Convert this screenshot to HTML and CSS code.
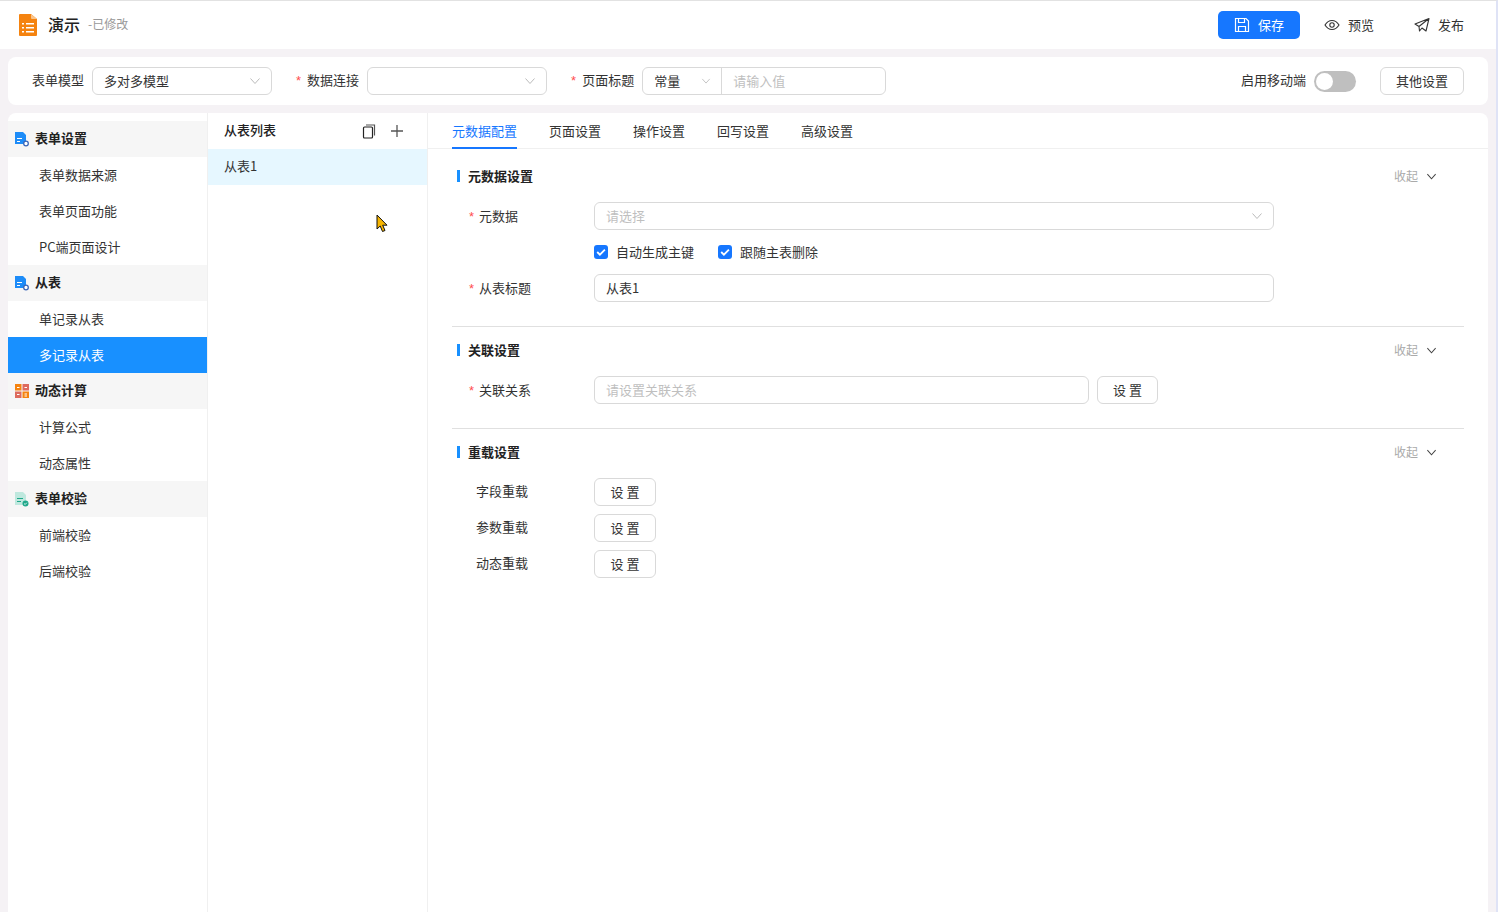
FILE: index.html
```html
<!DOCTYPE html>
<html lang="zh-CN">
<head>
<meta charset="utf-8">
<title>演示</title>
<link rel="stylesheet" href="styles.css">
</head>
<body>
<div class="page">
  <header class="topbar">
    <svg class="logo" width="18" height="22" viewBox="0 0 18 22"><path d="M1 0h11l6 5v16a1 1 0 0 1-1 1H1a1 1 0 0 1-1-1V1a1 1 0 0 1 1-1z" fill="#f5830f"/><path d="M12 0l6 5h-5a1 1 0 0 1-1-1z" fill="#f9c48c"/><path d="M3 9h2v1.500H3zM7 9h8v1.500H7zM3 13h2v1.500H3zM7 13h8v1.500H7zM3 17h2v1.500H3zM7 17h8v1.500H7z" fill="#fff"/></svg>
    <span class="app-name">演示</span>
    <span class="app-state">-已修改</span>
    <div class="top-actions">
      <button class="btn-save">
        <svg width="16" height="16" viewBox="0 0 16 16" fill="none" stroke="#fff" stroke-width="1.200"><path d="M1.500 1.500h10.500l2.500 2.500v10.500h-13z"/><path d="M4.500 1.500v4h6v-4M4.500 14.500v-5h7v5"/></svg>
        <span>保存</span>
      </button>
      <span class="top-link preview">
        <svg width="16" height="16" viewBox="0 0 16 16" fill="none" stroke="#333" stroke-width="1.100"><path d="M1 8c2-3.300 4.300-4.500 7-4.500s5 1.200 7 4.500c-2 3.300-4.300 4.500-7 4.500S3 11.300 1 8z"/><circle cx="8" cy="8" r="2.200"/></svg>
        <span>预览</span>
      </span>
      <span class="top-link publish">
        <svg width="16" height="16" viewBox="0 0 16 16" fill="none" stroke="#333" stroke-width="1.100" stroke-linejoin="round"><path d="M15 1.500L1 7l4 2.500L15 1.500l-3 12.500-4-3-2.500 3-.5-4.500"/></svg>
        <span>发布</span>
      </span>
    </div>
  </header>

  <section class="toolbar">
    <span class="tb-label tb-first">表单模型</span>
    <div class="select tb-model"><span>多对多模型</span><svg class="chev" viewBox="0 0 12 12"><path d="M1.500 3.500L6 8.500l4.500-5"/></svg></div>
    <span class="tb-label tb-conn"><i class="req">*</i>数据连接</span>
    <div class="select tb-data"><span></span><svg class="chev" viewBox="0 0 12 12"><path d="M1.500 3.500L6 8.500l4.500-5"/></svg></div>
    <span class="tb-label tb-title"><i class="req">*</i>页面标题</span>
    <div class="combo">
      <div class="combo-left"><span>常量</span><svg class="chev chev-small" viewBox="0 0 12 12"><path d="M1.500 3.500L6 8.500l4.500-5"/></svg></div>
      <div class="combo-right">请输入值</div>
    </div>
    <span class="tb-label tb-mobile">启用移动端</span>
    <span class="switch"><span class="knob"></span></span>
    <button class="btn tb-other">其他设置</button>
  </section>

  <main class="main">
    <nav class="side">
      <div class="group">
        <svg class="gicon" width="14" height="15" viewBox="0 0 14 15"><path d="M0 0h8l3 3v9H0z" fill="#1d8cf8"/><path d="M2 6h5v1H2zM2 9h3v1H2z" fill="#fff"/><circle cx="11" cy="11.500" r="2.300" fill="#fff" stroke="#3a66b8" stroke-width="1.300"/></svg>
        <span>表单设置</span>
      </div>
      <div class="item">表单数据来源</div>
      <div class="item">表单页面功能</div>
      <div class="item">PC端页面设计</div>
      <div class="group">
        <svg class="gicon" width="14" height="15" viewBox="0 0 14 15"><path d="M0 0h8l3 3v9H0z" fill="#1d8cf8"/><path d="M2 6h5v1H2zM2 9h3v1H2z" fill="#fff"/><circle cx="11" cy="11.500" r="2.300" fill="#fff" stroke="#3a66b8" stroke-width="1.300"/></svg>
        <span>从表</span>
      </div>
      <div class="item">单记录从表</div>
      <div class="item active">多记录从表</div>
      <div class="group">
        <svg class="gicon" width="14" height="14" viewBox="0 0 14 14"><rect width="6.500" height="6.500" fill="#f5830f"/><rect x="7.500" width="6.500" height="6.500" fill="#dd6b5e"/><rect y="7.500" width="6.500" height="6.500" fill="#dd6b5e"/><rect x="7.500" y="7.500" width="6.500" height="6.500" fill="#f5830f"/><path d="M2 3h2.500v1H2zM9.500 3H12v1H9.500zM2 10h2.500v1H2zM9.500 9.500H12v1H9.500zM9.500 11.500H12v1H9.500z" fill="#fff"/></svg>
        <span>动态计算</span>
      </div>
      <div class="item">计算公式</div>
      <div class="item">动态属性</div>
      <div class="group">
        <svg class="gicon" width="14" height="15" viewBox="0 0 14 15"><path d="M0 0h8l3 3v10H0z" fill="#bfe8de"/><path d="M2 6h6v1H2zM2 9h4v1H2z" fill="#1fa88a"/><circle cx="10.500" cy="11.500" r="3" fill="#1fa88a"/><path d="M9 11.500l1.200 1 1.600-1.800" stroke="#fff" stroke-width=".8" fill="none"/></svg>
        <span>表单校验</span>
      </div>
      <div class="item">前端校验</div>
      <div class="item">后端校验</div>
    </nav>

    <aside class="list">
      <div class="list-head">
        <span class="list-title">从表列表</span>
        <svg class="list-copy" width="14" height="15" viewBox="0 0 14 15" fill="none" stroke="#222" stroke-width="1.200"><rect x="1.500" y="3" width="9" height="11" rx="1"/><path d="M4 1h8.500v10.500" stroke="#555"/></svg>
        <svg class="list-add" width="14" height="14" viewBox="0 0 14 14" stroke="#555" stroke-width="1.300"><path d="M7 1v12M1 7h12"/></svg>
      </div>
      <div class="list-row">从表1</div>
    </aside>

    <div class="content">
      <div class="tabs">
        <span class="tab on">元数据配置</span>
        <span class="tab">页面设置</span>
        <span class="tab">操作设置</span>
        <span class="tab">回写设置</span>
        <span class="tab">高级设置</span>
      </div>
      <div class="body">
        <section class="sec sec-meta">
          <div class="sec-head"><span class="sec-title">元数据设置</span><span class="fold">收起</span><svg class="fold-chev" viewBox="0 0 12 12"><path d="M1.500 3.500L6 8.500l4.500-5"/></svg></div>
          <div class="row">
            <label class="lbl"><i class="req">*</i>元数据</label>
            <div class="select wide ph"><span>请选择</span><svg class="chev" viewBox="0 0 12 12"><path d="M1.500 3.500L6 8.500l4.500-5"/></svg></div>
          </div>
          <div class="checks">
            <span class="check"><svg width="14" height="14" viewBox="0 0 14 14"><rect width="14" height="14" rx="3" fill="#1677ff"/><path d="M3.200 7l2.700 2.700 5-5.100" fill="none" stroke="#fff" stroke-width="1.800"/></svg>自动生成主键</span>
            <span class="check"><svg width="14" height="14" viewBox="0 0 14 14"><rect width="14" height="14" rx="3" fill="#1677ff"/><path d="M3.200 7l2.700 2.700 5-5.100" fill="none" stroke="#fff" stroke-width="1.800"/></svg>跟随主表删除</span>
          </div>
          <div class="row">
            <label class="lbl"><i class="req">*</i>从表标题</label>
            <div class="select wide"><span>从表1</span></div>
          </div>
        </section>
        <section class="sec sec-rel">
          <div class="sec-head"><span class="sec-title">关联设置</span><span class="fold">收起</span><svg class="fold-chev" viewBox="0 0 12 12"><path d="M1.500 3.500L6 8.500l4.500-5"/></svg></div>
          <div class="row">
            <label class="lbl"><i class="req">*</i>关联关系</label>
            <div class="select rel ph"><span>请设置关联关系</span></div>
            <button class="btn rel-btn">设 置</button>
          </div>
        </section>
        <section class="sec sec-load">
          <div class="sec-head"><span class="sec-title">重载设置</span><span class="fold">收起</span><svg class="fold-chev" viewBox="0 0 12 12"><path d="M1.500 3.500L6 8.500l4.500-5"/></svg></div>
          <div class="row"><label class="lbl plain">字段重载</label><button class="btn set">设 置</button></div>
          <div class="row"><label class="lbl plain">参数重载</label><button class="btn set">设 置</button></div>
          <div class="row"><label class="lbl plain">动态重载</label><button class="btn set">设 置</button></div>
        </section>
      </div>
    </div>
  </main>
  <svg class="cursor" width="13" height="19" viewBox="0 0 13 19"><path d="M1 1v14l3.200-3 2.300 5.500 2.500-1-2.300-5.300H11z" fill="#f7b500" stroke="#111" stroke-width="1"/></svg>
</div>
</body>
</html>
```

FILE: styles.css
```css
* { box-sizing: border-box; }
html, body { margin: 0; height: 100%; }
body {
  font-family: "Noto Sans CJK SC", "Noto Sans", sans-serif;
  font-size: 13px;
  color: #333;
  background: #f5f2f5;
  overflow: hidden;
}
i { font-style: normal; }
button { font: inherit; cursor: pointer; }
.page {
  position: relative;
  width: 1498px;
  height: 912px;
  display: flex;
  flex-direction: column;
  border-top: 1px solid #e2e2e2;
  border-right: 2px solid #dfe3f6;
  overflow: hidden;
}
.topbar {
  height: 48px;
  flex: none;
  background: #fff;
  display: flex;
  align-items: center;
  padding: 0 32px 0 19px;
}
.logo { flex: none; }
.app-name { margin-left: 11px; font-size: 16px; font-weight: 500; color: #222; padding-bottom: 2px; }
.app-state { margin-left: 8px; font-size: 12px; color: #999; padding-bottom: 3px; }
.top-actions { margin-left: auto; display: flex; align-items: center; }
.btn-save {
  width: 82px;
  height: 28px;
  background: #1677ff;
  color: #fff;
  border: 0;
  border-radius: 5px;
  display: flex;
  align-items: center;
  justify-content: center;
  gap: 8px;
}
.btn-save span, .top-link span { padding-bottom: 2px; }
.top-link { display: flex; align-items: center; gap: 8px; }
.preview { margin-left: 24px; }
.publish { margin-left: 40px; }
.toolbar {
  height: 48px;
  flex: none;
  margin: 8px 8px 8px 8px;
  width: 1480px;
  background: #fff;
  border-radius: 8px;
  display: flex;
  align-items: center;
  padding: 0 24px;
}
.tb-label { color: #333; white-space: nowrap; padding-bottom: 3px; }
.tb-first { margin-right: 8px; }
.tb-conn { margin-left: 24px; margin-right: 8px; }
.tb-title { margin-left: 24px; margin-right: 8px; }
.req { color: #ff4d4f; margin-right: 6px; font-family: "Liberation Sans", sans-serif; }
.lbl .req { margin-right: 5px; }
.select {
  height: 28px;
  border: 1px solid #d9d9d9;
  border-radius: 6px;
  background: #fff;
  display: flex;
  align-items: center;
  justify-content: space-between;
  padding: 0 10px 0 11px;
  flex: none;
}
.select span { padding-bottom: 2px; }
.tb-model, .tb-data { width: 180px; }
.chev { width: 12px; height: 12px; fill: none; stroke: #bbb; stroke-width: 1; flex: none; }
.chev-small { width: 10px; height: 10px; }
.combo {
  width: 244px;
  height: 28px;
  border: 1px solid #d9d9d9;
  border-radius: 6px;
  display: flex;
  flex: none;
}
.combo-left {
  width: 79px;
  border-right: 1px solid #d9d9d9;
  display: flex;
  align-items: center;
  justify-content: space-between;
  padding: 0 10px 0 11px;
}
.combo-left span { padding-bottom: 2px; }
.combo-right { flex: 1; padding-left: 11px; line-height: 26px; color: #bfbfbf; }
.tb-mobile { margin-left: auto; margin-right: 8px; }
.switch {
  width: 42px;
  height: 21px;
  border-radius: 11px;
  background: #bfbfbf;
  padding: 2px;
  flex: none;
  margin-top: 1px;
  margin-right: 24px;
}
.knob { display: block; width: 17px; height: 17px; border-radius: 50%; background: #fff; }
.btn {
  height: 28px;
  background: #fff;
  color: #333;
  border: 1px solid #d9d9d9;
  border-radius: 6px;
  padding: 0 0 2px;
  flex: none;
}
.tb-other { width: 84px; }
.main {
  width: 1480px;
  margin: 0 8px;
  flex: 1;
  min-height: 0;
  display: flex;
  background: #fff;
  border-radius: 8px 8px 0 0;
  overflow: hidden;
}
.side { width: 200px; flex: none; padding-top: 8px; border-right: 1px solid #f0f0f0; }
.group {
  height: 36px;
  background: #f6f6f6;
  display: flex;
  align-items: center;
  gap: 6px;
  padding-left: 7px;
  font-weight: 700;
  color: #222;
}
.group span { padding-bottom: 3px; }
.gicon { flex: none; }
.item { height: 36px; line-height: 35px; padding-left: 31px; color: #333; }
.item.active { background: #1890ff; color: #fff; }
.list { width: 220px; flex: none; border-right: 1px solid #f0f0f0; }
.list-head {
  height: 36px;
  display: flex;
  align-items: center;
  padding: 0 16px;
}
.list-title { font-weight: 500; color: #222; margin-right: auto; padding-bottom: 3px; }
.list-add { margin-left: 14px; margin-right: 7px; }
.list-row { height: 36px; line-height: 34px; padding-left: 16px; background: #e6f7ff; }
.content { flex: 1; min-width: 0; }
.tabs {
  height: 36px;
  border-bottom: 1px solid #f0f0f0;
  display: flex;
  gap: 32px;
  padding-left: 24px;
}
.tab { height: 36px; line-height: 35px; }
.tab.on { color: #1677ff; border-bottom: 2px solid #1677ff; }
.body { padding: 0 24px; }
.sec { display: flex; flex-direction: column; }
.sec-meta { height: 178px; border-bottom: 1px solid #e0e0e0; }
.sec-rel { height: 102px; border-bottom: 1px solid #e0e0e0; }
.sec-head { height: 47px; flex: none; display: flex; align-items: center; padding-left: 5px; padding-right: 27px; }
.sec-meta .sec-head { padding-top: 7px; }
.sec-title {
  font-weight: 700;
  color: #222;
  padding-left: 8px;
  border-left: 3px solid #1890ff;
  line-height: 12px;
  margin-right: auto;
}
.sec-rel .sec-title, .sec-load .sec-title { margin-bottom: 2px; }
.fold { font-size: 12px; color: #aaa; margin-right: 8px; padding-bottom: 2px; }
.fold-chev { width: 11px; height: 11px; fill: none; stroke: #444; stroke-width: 1.100; }
.row { display: flex; align-items: center; height: 28px; margin-bottom: 8px; flex: none; }
.sec-head + .row { margin-top: 2px; }
.sec-meta .sec-head + .row { margin-top: 6px; }
.lbl { width: 142px; flex: none; padding-left: 17px; padding-bottom: 2px; }
.lbl.plain { padding-left: 24px; padding-bottom: 4px; }
.wide { width: 680px; }
.rel { width: 495px; }
.ph { color: #bfbfbf; }
.rel-btn { width: 61px; margin-left: 8px; }
.set { width: 62px; }
.checks {
  height: 28px;
  margin-bottom: 8px;
  padding-left: 142px;
  display: flex;
  align-items: center;
  gap: 24px;
}
.check { display: flex; align-items: center; gap: 8px; padding-bottom: 2px; }
.check svg { margin-top: 2px; }
.cursor { position: absolute; left: 376px; top: 213px; }
```
